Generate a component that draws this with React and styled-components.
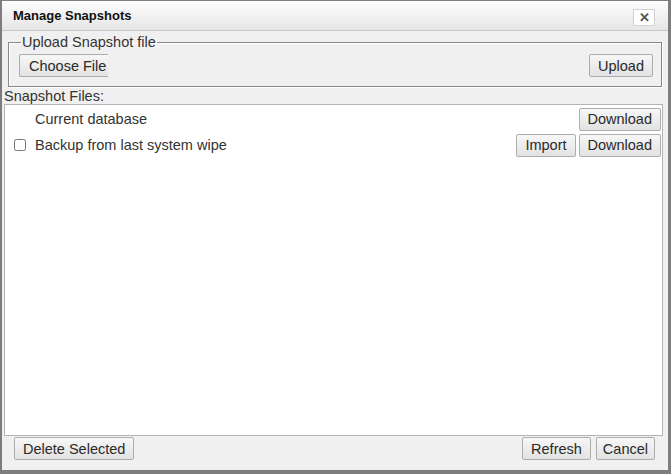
import styled, { createGlobalStyle } from "styled-components"

const Global = createGlobalStyle`
  html, body { margin: 0; padding: 0; background: #fff; }
  body { font-family: "Liberation Sans", Arial, sans-serif; }
`

const files = [
  { name: "Current database", current: true },
  { name: "Backup from last system wipe", current: false },
]

export default function App() {
  return (
    <>
      <Global />
      <Dialog>
        <TitleBar>
          <Title>Manage Snapshots</Title>
          <Close>✕</Close>
        </TitleBar>
        <Body>
          <Upload>
            <legend>Upload Snapshot file</legend>
            <UploadRow>
              <FileButton>Choose File</FileButton>
              <Button>Upload</Button>
            </UploadRow>
          </Upload>
          <Label>Snapshot Files:</Label>
          <List>
            {files.map((file) => (
              <Row key={file.name}>
                <Check>{!file.current && <input type="checkbox" />}</Check>
                <Name>{file.name}</Name>
                <Actions>
                  {!file.current && <Button>Import</Button>}
                  <Button>Download</Button>
                </Actions>
              </Row>
            ))}
          </List>
          <Footer>
            <Button>Delete Selected</Button>
            <Actions wide>
              <Button>Refresh</Button>
              <Button narrow>Cancel</Button>
            </Actions>
          </Footer>
        </Body>
      </Dialog>
    </>
  )
}

const Dialog = styled.div`
  width: 671px;
  height: 474px;
  box-sizing: border-box;
  display: flex;
  flex-direction: column;
  background: #f0f0f0;
  border-style: solid;
  border-color: #7d7d7d;
  border-width: 1px 3px 4px 2px;
  font-size: 14.5px;
  color: #222;
`

const TitleBar = styled.div`
  height: 29px;
  flex: none;
  display: flex;
  align-items: center;
  justify-content: space-between;
  padding: 0 13px 0 11px;
  background: linear-gradient(#fdfdfd, #e6e6e6);
  border-bottom: 1px solid #c8c8c8;
`

const Title = styled.div`
  font-weight: bold;
  font-size: 13px;
  color: #111;
`

const Close = styled.div`
  width: 20px;
  height: 15px;
  display: flex;
  align-items: center;
  justify-content: center;
  background: #fff;
  border: 1px solid #d2d2d2;
  font-size: 13px;
  font-weight: bold;
  color: #555;
  margin-top: 3px;
`

const Body = styled.div`
  flex: 1;
  display: flex;
  flex-direction: column;
  padding: 0 4px 0 2px;
  min-height: 0;
`

const Upload = styled.fieldset`
  margin: 3px 2px 0 4px;
  padding: 0 8px 9px 10px;
  border: 1px solid #888;
  box-shadow: inset 1px 1px 0 #fff, 1px 1px 0 #fff;

  legend {
    padding: 0 1px;
    margin-left: 2px;
    color: #333;
    font-size: 14.5px;
  }
`

const UploadRow = styled.div`
  display: flex;
  justify-content: space-between;
  margin-top: 4px;
`

const Button = styled.button`
  font-family: "Liberation Sans", Arial, sans-serif;
  font-size: 14.5px;
  color: #2a2a2a;
  height: 23px;
  padding: ${({ narrow }) => (narrow ? "0 6px" : "0 8px")};
  background: linear-gradient(#f7f7f7, #e2e2e2);
  border: 1px solid #adadad;
  border-radius: 2px;
  cursor: pointer;
`

const FileButton = styled(Button)`
  width: 89px;
  padding: 0 0 0 9px;
  text-align: left;
  white-space: nowrap;
  overflow: hidden;
  border-right: none;
  border-radius: 2px 0 0 2px;
`

const Label = styled.div`
  margin-top: 1px;
  height: 16px;
  line-height: 16px;
  color: #333;
`

const List = styled.div`
  flex: 1;
  margin: 0 1px 0 0;
  background: #fff;
  border: 1px solid #b4b4b4;
  padding: 1px 1px 0 0;
`

const Row = styled.div`
  display: flex;
  align-items: center;
  height: 26px;
`

const Check = styled.div`
  width: 30px;
  display: flex;
  justify-content: center;
  input {
    margin: 0;
    width: 12px;
    height: 12px;
  }
`

const Name = styled.div`
  flex: 1;
  color: #333;
`

const Actions = styled.div`
  display: flex;
  gap: ${({ wide }) => (wide ? "5px" : "3px")};
`

const Footer = styled.div`
  display: flex;
  justify-content: space-between;
  padding: 1px 9px 0 10px;
  height: 33px;
`
